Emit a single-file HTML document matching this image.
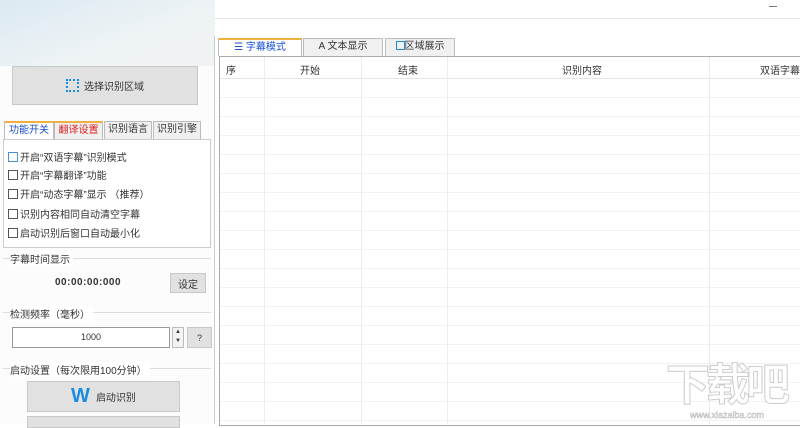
<!DOCTYPE html>
<html><head><meta charset="utf-8"><style>
*{margin:0;padding:0;box-sizing:border-box}
body{width:800px;height:424px;overflow:hidden;background:#fff;font-family:"Liberation Sans","Noto Sans CJK SC",sans-serif;font-size:10px;color:#333;position:relative}
.a{position:absolute}
.btn{position:absolute;background:#e1e1e1;border:1px solid #c8c8c8;display:flex;align-items:center;justify-content:center}
.cb{position:absolute;left:8px;display:flex;align-items:center;font-size:10px;color:#333}
.cb i{display:inline-block;width:10px;height:10px;border:1px solid #555;margin-right:2px;background:#fff}
.tab{position:absolute;top:121px;height:18px;border:1px solid #bbb;border-bottom:none;background:#f0f0f0;font-size:10px;line-height:16px;text-align:center}
.lbl{position:absolute;font-size:10px;color:#333;background:#fff;padding-right:3px}
</style></head><body>
<div class="a" style="left:0;top:0;width:800px;height:19px;background:#fff;border-bottom:1px solid #e6e6e6"></div>
<div class="a" style="left:769px;top:6px;width:8px;height:1px;background:#777"></div>
<div class="a" style="left:0;top:0;width:215px;height:66px;background:linear-gradient(160deg,#dbe9f2,#eef3f5 60%,#f1f3f3)"></div>
<div class="a" style="left:214px;top:36px;width:1px;height:388px;background:#ccc"></div>
<div class="a" style="left:0;top:66px;width:214px;height:358px;background:#fcfcfc"></div>

<div class="btn" style="left:12px;top:66px;width:186px;height:39px;font-size:10px"><span style="display:inline-block;width:13px;height:13px;border:2px dotted #1a8de0;margin-right:5px"></span>选择识别区域</div>

<div class="tab" style="left:4px;width:50px;color:#1a4fd0;background:#fff;border-top:2px solid #f0b040">功能开关</div>
<div class="tab" style="left:54px;width:49px;color:#e02020;border-top:2px solid #f0b040">翻译设置</div>
<div class="tab" style="left:104px;width:48px">识别语言</div>
<div class="tab" style="left:153px;width:48px">识别引擎</div>
<div class="a" style="left:3px;top:139px;width:208px;height:109px;border:1px solid #ccc;background:#fff"></div>
<div class="cb" style="top:149px"><i style="border-color:#4a90d9"></i>开启“双语字幕”识别模式</div>
<div class="cb" style="top:167px"><i></i>开启“字幕翻译”功能</div>
<div class="cb" style="top:186px"><i></i>开启“动态字幕”显示 （推荐）</div>
<div class="cb" style="top:206px"><i></i>识别内容相同自动清空字幕</div>
<div class="cb" style="top:225px"><i></i>启动识别后窗口自动最小化</div>

<div class="a" style="left:3px;top:258px;width:208px;height:1px;background:#ddd"></div>
<div class="lbl" style="left:10px;top:251px">字幕时间显示</div>
<div class="a" style="left:55px;top:277px;font-weight:bold;font-size:10px;letter-spacing:.5px">00:00:00:000</div>
<div class="btn" style="left:170px;top:273px;width:36px;height:20px">设定</div>

<div class="a" style="left:3px;top:312px;width:208px;height:1px;background:#ddd"></div>
<div class="lbl" style="left:10px;top:306px">检测频率（毫秒）</div>
<div class="a" style="left:12px;top:327px;width:158px;height:21px;border:1px solid #999;background:#fff;text-align:center;line-height:19px;font-size:9px">1000</div>
<div class="a" style="left:172px;top:327px;width:12px;height:21px;border:1px solid #bbb;background:#f3f3f3;font-size:6px;text-align:center;line-height:9px">▲<br>▼</div>
<div class="btn" style="left:187px;top:327px;width:25px;height:21px;font-size:9px">?</div>

<div class="a" style="left:3px;top:368px;width:208px;height:1px;background:#ddd"></div>
<div class="lbl" style="left:10px;top:362px">启动设置（每次限用100分钟）</div>
<div class="btn" style="left:27px;top:381px;width:153px;height:31px"><b style="color:#1a8de0;font-size:20px;margin-right:6px;font-family:'Liberation Sans'">W</b>启动识别</div>
<div class="btn" style="left:27px;top:416px;width:153px;height:12px"></div>

<div class="tab" style="left:218px;top:38px;width:84px;color:#1a4fd0;background:#fff;border-top:2px solid #f0b040;line-height:15px">☰ 字幕模式</div>
<div class="tab" style="left:303px;top:38px;width:80px;color:#333;line-height:16px">A 文本显示</div>
<div class="tab" style="left:385px;top:38px;width:70px;color:#333;line-height:16px"><span style="display:inline-block;width:9px;height:9px;border:1.5px solid #1a8de0;vertical-align:-1px"></span>区域展示</div>

<div class="a" style="left:219px;top:56px;width:590px;height:370px;border:1px solid #aaa;background:#fff;
background-image:repeating-linear-gradient(to bottom,transparent 0,transparent 18px,#f2f2f2 18px,#f2f2f2 19px);background-position:0 22px"></div>
<div class="a" style="left:220px;top:57px;width:580px;height:22px;background:#fff;border-bottom:1px solid #e4e4e4"></div>
<div class="a" style="left:264px;top:57px;width:1px;height:367px;background:#ececec"></div>
<div class="a" style="left:361px;top:57px;width:1px;height:367px;background:#ececec"></div>
<div class="a" style="left:447px;top:57px;width:1px;height:367px;background:#ececec"></div>
<div class="a" style="left:709px;top:57px;width:1px;height:367px;background:#ececec"></div>
<div class="a" style="left:226px;top:62px">序</div>
<div class="a" style="left:300px;top:62px">开始</div>
<div class="a" style="left:398px;top:62px">结束</div>
<div class="a" style="left:562px;top:62px">识别内容</div>
<div class="a" style="left:760px;top:62px">双语字幕</div>

<div class="a" style="left:666px;top:364px;font-size:44px;font-weight:bold;color:#fff;-webkit-text-stroke:1px #ccc;letter-spacing:-4px;line-height:44px">下载吧</div>
<div class="a" style="left:690px;top:410px;font-size:9px;color:#fff;-webkit-text-stroke:.5px #bbb">www.xiazaiba.com</div>
</body></html>
